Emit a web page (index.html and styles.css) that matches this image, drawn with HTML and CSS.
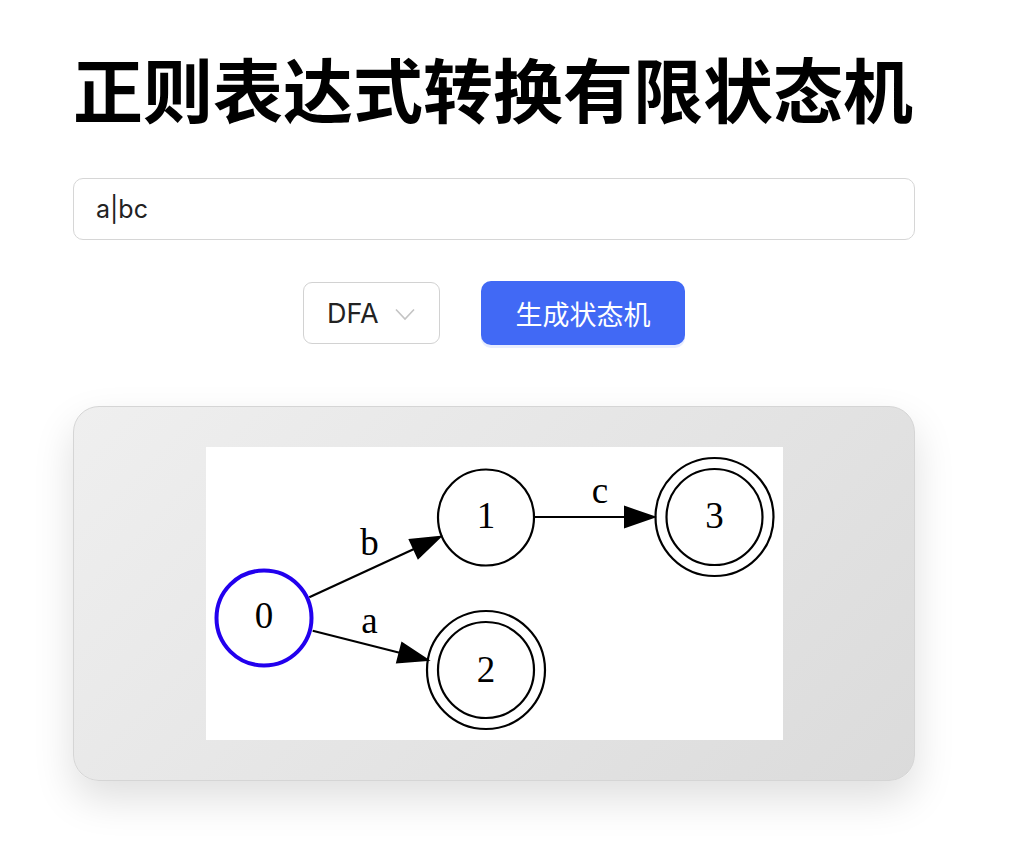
FILE: index.html
```html
<!DOCTYPE html>
<html lang="zh">
<head>
<meta charset="utf-8">
<title>正则表达式转换有限状态机</title>
<link rel="stylesheet" href="styles.css">
</head>
<body>
<main class="app">
  <h1 class="title">正则表达式转换有限状态机</h1>
  <input class="regex-input" type="text" value="a|bc">
  <div class="controls">
    <div class="select">
      <span class="select-value">DFA</span>
      <svg class="chevron" width="20" height="13" viewBox="0 0 20 13"><path d="M1 1.5 L10 11 L19 1.5" fill="none" stroke="#c4c4c4" stroke-width="1.6"/></svg>
    </div>
    <button class="btn">生成状态机</button>
  </div>
  <section class="card">
    <svg class="graph" width="577" height="293" viewBox="0 0 577 293">
      <rect width="577" height="293" fill="#fff"/>
      <g fill="none" stroke="#000" stroke-width="2.2">
        <circle cx="58" cy="171" r="47.5" stroke="#2200ee" stroke-width="4"/>
        <circle cx="280" cy="70.5" r="48"/>
        <circle cx="280" cy="223" r="48"/>
        <circle cx="280" cy="223" r="59"/>
        <circle cx="508.5" cy="70" r="48"/>
        <circle cx="508.5" cy="70" r="59"/>
        <line x1="103.3" y1="150.3" x2="208" y2="101.9"/>
        <line x1="106.7" y1="183.7" x2="193.6" y2="205.8"/>
        <line x1="328" y1="70" x2="420" y2="70"/>
      </g>
      <g fill="#000" stroke="#000" stroke-width="2">
        <polygon points="234.3,89.7 212.2,111 203.8,92.8"/>
        <polygon points="221.7,213 191.1,215.5 196.1,196.1"/>
        <polygon points="448,70 419,60 419,80"/>
      </g>
      <g class="lbl" text-anchor="middle">
        <text x="58" y="181">0</text>
        <text x="280" y="81">1</text>
        <text x="280" y="234.5">2</text>
        <text x="508.5" y="81">3</text>
        <text x="163.5" y="108">b</text>
        <text x="163.5" y="186">a</text>
        <text x="394" y="56">c</text>
      </g>
    </svg>
  </section>
</main>
</body>
</html>
```
FILE: styles.css
```css
html, body {
  margin: 0;
  padding: 0;
  background: #fff;
}
body {
  font-family: Inter, "Noto Sans", "Noto Sans CJK SC", sans-serif;
  color: #1f1f1f;
}
.app {
  width: 842px;
  margin-left: 73px;
  padding-bottom: 79px;
  display: flex;
  flex-direction: column;
}
.title {
  margin: 46px 0 0;
  font-family: "Noto Sans CJK SC", sans-serif;
  font-weight: 700;
  font-size: 70px;
  line-height: 84px;
  color: #000;
  white-space: nowrap;
}
.regex-input {
  margin-top: 48px;
  box-sizing: border-box;
  width: 842px;
  height: 62px;
  border: 1.5px solid #d6d6d6;
  border-radius: 10px;
  padding: 0 22px;
  font-family: Inter, "Noto Sans", sans-serif;
  font-size: 25px;
  color: #222;
  outline: none;
  background: #fff;
}
.controls {
  margin-top: 41px;
  display: flex;
  justify-content: center;
  align-items: center;
  gap: 41px;
}
.select {
  box-sizing: border-box;
  width: 137px;
  height: 62px;
  border: 1.5px solid #d2d2d2;
  border-radius: 9px;
  display: flex;
  align-items: center;
  padding-left: 23px;
  font-family: Inter, "Noto Sans", sans-serif;
  font-size: 27px;
  color: #222;
  background: #fff;
}
.chevron {
  margin-left: 16px;
  margin-top: 2px;
}
.btn {
  box-sizing: border-box;
  width: 204px;
  height: 64px;
  border: none;
  border-radius: 10px;
  background: #4169f5;
  color: #fff;
  font-family: "Noto Sans CJK SC", sans-serif;
  font-size: 27px;
  box-shadow: 0 3px 0 rgba(65, 105, 245, 0.12);
  padding: 0;
}
.card {
  margin-top: 61px;
  box-sizing: border-box;
  height: 375px;
  border: 1.5px solid #d5d5d5;
  border-radius: 26px;
  background: linear-gradient(135deg, #efefef 0%, #dbdbdb 100%);
  box-shadow: 0 18px 40px rgba(0, 0, 0, 0.13);
  display: flex;
  justify-content: center;
  align-items: center;
}
.graph {
  display: block;
}
.lbl text {
  font-family: "Liberation Serif", serif;
  font-size: 37px;
  fill: #000;
}
```
